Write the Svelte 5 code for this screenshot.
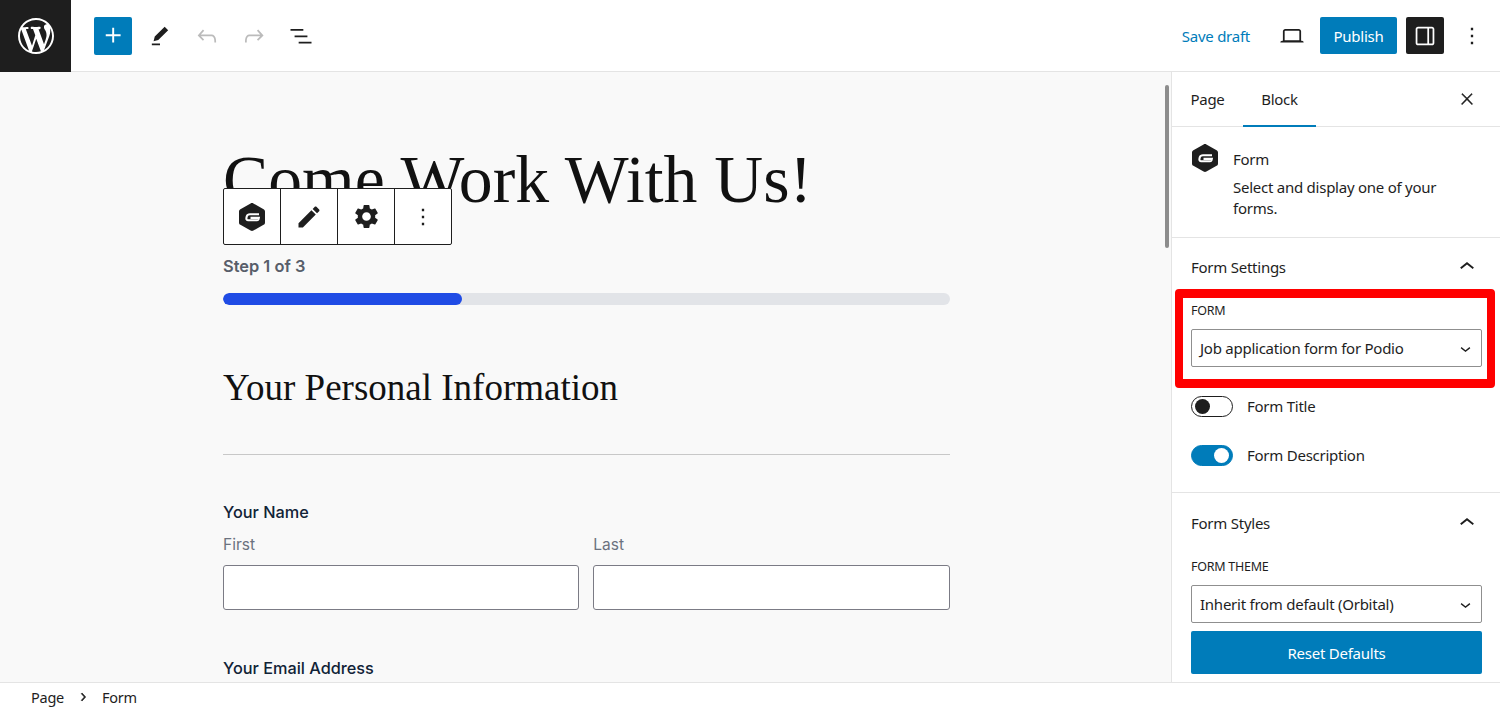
<script lang="ts">
  const icons = {
    plus: "M11 12.5V17.5H12.5V12.5H17.5V11H12.5V6H11V11H6V12.5H11Z",
    tools: "m19 7-3-3-8.5 8.5-1 4 4-1L19 7Zm-7 11.5H5V20h7v-1.5Z",
    undo: "M18.3 11.7c-.6-.6-1.4-.9-2.3-.9H6.7l2.9-3.3-1.1-1-4.5 5L8.5 16l1-1-2.7-2.7H16c.5 0 .9.2 1.3.5 1 1 1 3.4 1 4.5v.3h1.5v-.2c0-1.5 0-4.3-1.5-5.7z",
    redo: "M15.6 6.5l-1.1 1 2.9 3.3H8c-.9 0-1.7.3-2.3.9-1.4 1.5-1.4 4.2-1.4 5.6v.2h1.5v-.3c0-1.1 0-3.5 1-4.5.3-.3.7-.5 1.3-.5h9.2L14.5 15l1.1 1.1 4.6-4.6-4.6-5z",
    list: "M3 6h11v1.5H3V6Zm3.5 5.5h11V13h-11v-1.5ZM21 17H10v1.5h11V17Z",
    laptop: "M20.5 16h-.7V8c0-1.1-.9-2-2-2H6.2c-1.1 0-2 .9-2 2v8h-.7c-.8 0-1.5.7-1.5 1.5h20c0-.8-.7-1.5-1.5-1.5zM5.7 8c0-.3.2-.5.5-.5h11.6c.3 0 .5.2.5.5v7.6H5.7V8z",
    sidebar: "M18 4H6c-1.1 0-2 .9-2 2v12c0 1.1.9 2 2 2h12c1.1 0 2-.9 2-2V6c0-1.1-.9-2-2-2zm-4 14.5H6c-.3 0-.5-.2-.5-.5V6c0-.3.2-.5.5-.5h8v13zm4.5-.5c0 .3-.2.5-.5.5h-2.5v-13H18c.3 0 .5.2.5.5v12z",
    more: "M13 19h-2v-2h2v2zm0-6h-2v-2h2v2zm0-6h-2V5h2v2z",
    close: "M13 11.8l6.1-6.3-1-1-6.1 6.2-6.1-6.2-1 1 6.1 6.3-6.5 6.7 1 1 6.5-6.6 6.5 6.6 1-1z",
    up: "M6.5 12.4L12 8l5.5 4.4-.9 1.2L12 10l-4.5 3.6-1-1.2z",
    down: "M17.5 11.6L12 16l-5.5-4.4.9-1.2L12 14l4.5-3.6 1 1.2z",
    right: "M10.6 6L9.4 7l4.6 5-4.6 5 1.2 1 5.4-6z",
    pencil: "M3 17.25V21h3.75L17.81 9.94l-3.75-3.75L3 17.25zM20.71 7.04c.39-.39.39-1.02 0-1.41l-2.34-2.34c-.39-.39-1.02-.39-1.41 0l-1.83 1.83 3.75 3.75 1.83-1.83z",
    gear: "M19.14 12.94c.04-.3.06-.61.06-.94 0-.32-.02-.64-.07-.94l2.03-1.58c.18-.14.23-.41.12-.61l-1.92-3.32c-.12-.22-.37-.29-.59-.22l-2.39.96c-.5-.38-1.03-.7-1.62-.94l-.36-2.54c-.04-.24-.24-.41-.48-.41h-3.84c-.24 0-.43.17-.47.41l-.36 2.54c-.59.24-1.13.57-1.62.94l-2.39-.96c-.22-.08-.47 0-.59.22L2.74 8.87c-.12.21-.08.47.12.61l2.03 1.58c-.05.3-.09.63-.09.94s.02.64.07.94l-2.03 1.58c-.18.14-.23.41-.12.61l1.92 3.32c.12.22.37.29.59.22l2.39-.96c.5.38 1.03.7 1.62.94l.36 2.54c.05.24.24.41.48.41h3.84c.24 0 .44-.17.47-.41l.36-2.54c.59-.24 1.13-.56 1.62-.94l2.39.96c.22.08.47 0 .59-.22l1.92-3.32c.12-.22.07-.47-.12-.61l-2.01-1.58zM12 15.6c-1.98 0-3.6-1.62-3.6-3.6s1.62-3.6 3.6-3.6 3.6 1.62 3.6 3.6-1.62 3.6-3.6 3.6z",
    wp: "M20 10c0-5.51-4.49-10-10-10C4.48 0 0 4.49 0 10c0 5.52 4.48 10 10 10 5.51 0 10-4.48 10-10zM7.78 15.37L4.37 6.22c.55-.02 1.17-.08 1.17-.08.5-.06.44-1.13-.06-1.11 0 0-1.45.11-2.37.11-.18 0-.37 0-.58-.01C4.12 2.69 6.87 1.11 10 1.11c2.33 0 4.45.87 6.05 2.34-.68-.11-1.65.39-1.65 1.58 0 .74.45 1.36.9 2.1.35.61.55 1.36.55 2.46 0 1.49-1.4 5-1.4 5l-3.03-8.37c.54-.02.82-.17.82-.17.5-.05.44-1.25-.06-1.22 0 0-1.44.12-2.38.12-.87 0-2.33-.12-2.33-.12-.5-.03-.56 1.2-.06 1.22l.92.08 1.26 3.41zM17.41 10c.24-.64.74-1.87.43-4.25.7 1.29 1.05 2.71 1.05 4.25 0 3.29-1.73 6.24-4.4 7.78.97-2.59 1.94-5.2 2.92-7.78zM6.1 18.09C3.12 16.65 1.11 13.53 1.11 10c0-1.3.23-2.48.72-3.59C3.25 10.3 4.67 14.2 6.1 18.09zm4.03-6.63l2.58 6.98c-.86.29-1.76.45-2.71.45-.79 0-1.57-.11-2.29-.33.81-2.38 1.62-4.74 2.42-7.1z"
  };
</script>

{#snippet icon(d: string, size = 28, box = 24)}
  <svg class="icon" width={size} height={size} viewBox="0 0 {box} {box}" fill="currentColor"><path {d} /></svg>
{/snippet}

{#snippet gravity()}
  <svg class="icon" width="26" height="28" viewBox="0 0 26 28">
    <path d="M13 0c.5 0 1 .1 1.4.4l10.200 5.800c.9.500 1.400 1.400 1.400 2.400v10.800c0 1-.5 1.900-1.400 2.400l-10.200 5.800c-.9.500-1.900.500-2.800 0L1.400 21.800C.5 21.300 0 20.400 0 19.400V8.600c0-1 .5-1.900 1.400-2.400L11.600.4c.4-.3.9-.4 1.400-.4Z" fill="#1e1e1e" />
    <path d="M20 11.200H11c-1.800 0-2.800.8-3.200 2.100l-.3 1.200c-.4 1.700.2 2.800 1.800 2.800h8.800c.8 0 1.200-.3 1.400-1l.3-1.400H11.500" fill="none" stroke="#fff" stroke-width="2.100" />
  </svg>
{/snippet}

<div class="editor">
  <header class="topbar">
    <a class="wp-logo" href="#top" aria-label="WordPress">{@render icon(icons.wp, 36, 20)}</a>
    <div class="tools">
      <button class="add">{@render icon(icons.plus, 31)}</button>
      <button class="tool">{@render icon(icons.tools)}</button>
      <button class="tool off">{@render icon(icons.undo)}</button>
      <button class="tool off">{@render icon(icons.redo)}</button>
      <button class="tool">{@render icon(icons.list)}</button>
    </div>
    <div class="actions">
      <button class="save">Save draft</button>
      <button class="tool view">{@render icon(icons.laptop)}</button>
      <button class="publish">Publish</button>
      <button class="side-toggle">{@render icon(icons.sidebar)}</button>
      <button class="tool dots">{@render icon(icons.more)}</button>
    </div>
  </header>

  <div class="main">
    <main class="canvas">
      <div class="scroll-thumb"></div>
      <div class="doc">
        <h1>Come Work With Us!</h1>
        <div class="block-toolbar">
          <button>{@render gravity()}</button>
          <button>{@render icon(icons.pencil, 28)}</button>
          <button>{@render icon(icons.gear, 29)}</button>
          <button>{@render icon(icons.more, 28)}</button>
        </div>
        <div class="step">Step 1 of 3</div>
        <div class="progress"><div class="bar" style="width: 32.9%"></div></div>
        <h2>Your Personal Information</h2>
        <hr />
        <div class="legend">Your Name</div>
        <div class="name-row">
          <label>First<input type="text" /></label>
          <label>Last<input type="text" /></label>
        </div>
        <div class="legend email">Your Email Address</div>
      </div>
    </main>

    <aside class="sidebar">
      <div class="tabs">
        <button class="tab">Page</button>
        <button class="tab active">Block</button>
        <button class="tab-close">{@render icon(icons.close, 18)}</button>
      </div>

      <section class="block-card">
        {@render gravity()}
        <div class="card-text">
          <div class="card-title">Form</div>
          <p>Select and display one of your forms.</p>
        </div>
      </section>

      <section class="panel settings">
        <div class="panel-head"><span>Form Settings</span>{@render icon(icons.up, 30)}</div>
        <div class="highlight">
          <div class="field-label">FORM</div>
          <div class="select"><span>Job application form for Podio</span>{@render icon(icons.down, 21)}</div>
        </div>
        <div class="toggle-row">
          <span class="toggle"><i></i></span>Form Title
        </div>
        <div class="toggle-row">
          <span class="toggle on"><i></i></span>Form Description
        </div>
      </section>

      <section class="panel styles">
        <div class="panel-head"><span>Form Styles</span>{@render icon(icons.up, 30)}</div>
        <div class="field-label">FORM THEME</div>
        <div class="select"><span>Inherit from default (Orbital)</span>{@render icon(icons.down, 21)}</div>
        <button class="reset">Reset Defaults</button>
      </section>
    </aside>
  </div>

  <footer class="crumbs">
    <span>Page</span><span class="sep">{@render icon(icons.right, 16)}</span><span>Form</span>
  </footer>
</div>

<style>
  :global(body) { margin: 0; background: #fff; }
  .editor {
    height: 710px;
    display: flex;
    flex-direction: column;
    overflow: hidden;
    color: #1e1e1e;
    font-family: "Noto Sans", "Open Sans", sans-serif;
    font-size: 15px;
    letter-spacing: -0.25px;
  }
  button {
    font: inherit;
    letter-spacing: inherit;
    color: inherit;
    background: none;
    border: 0;
    padding: 0;
    display: flex;
    align-items: center;
    justify-content: center;
  }
  .icon { display: block; flex-shrink: 0; }

  /* top bar */
  .topbar {
    height: 71px;
    flex-shrink: 0;
    display: flex;
    align-items: center;
    background: #fff;
    border-bottom: 1px solid #e4e4e4;
  }
  .wp-logo {
    width: 71px;
    height: 72px;
    margin-bottom: -1px;
    background: #1e1e1e;
    color: #fff;
    display: flex;
    align-items: center;
    justify-content: center;
  }
  .tools { display: flex; align-items: center; margin-left: 23px; }
  .add {
    width: 38px;
    height: 38px;
    border-radius: 2px;
    background: #007cba;
    color: #fff;
    margin-right: 9px;
  }
  .tool { width: 38px; height: 38px; }
  .tools .tool + .tool { margin-left: 9px; }
  .tool.off { color: #bbb; }
  .actions { margin-left: auto; display: flex; align-items: center; }
  .save { color: #007cba; margin-right: 23px; }
  .view { margin-right: 9px; }
  .publish {
    width: 77px;
    height: 37px;
    border-radius: 2px;
    background: #007cba;
    color: #fff;
    margin-right: 9px;
  }
  .side-toggle {
    width: 38px;
    height: 37px;
    border-radius: 2px;
    background: #1e1e1e;
    color: #fff;
  }
  .dots { margin: 0 9px; }

  /* main */
  .main { flex: 1; min-height: 0; display: flex; }
  .canvas {
    flex: 1;
    min-width: 0;
    position: relative;
    overflow: hidden;
    background: #f9f9f9;
  }
  .scroll-thumb {
    position: absolute;
    left: 1165px;
    top: 13px;
    width: 4px;
    height: 163px;
    border-radius: 2px;
    background: #8d8d8d;
  }
  .doc {
    position: relative;
    width: 726.5px;
    margin-left: 223px;
    padding-top: 69px;
    font-family: Inter, sans-serif;
    letter-spacing: 0;
  }
  h1 {
    margin: 0;
    font: 400 67.7px/78px "Liberation Serif", serif;
    color: #111;
  }
  .block-toolbar {
    position: absolute;
    left: 0;
    top: 116px;
    display: flex;
    background: #fff;
    border: 1px solid #1e1e1e;
    border-radius: 2px;
  }
  .block-toolbar button {
    width: 57px;
    height: 55px;
    border-left: 1px solid #1e1e1e;
    color: #1e1e1e;
  }
  .block-toolbar button:first-child { width: 56px; border-left: 0; }
  .step {
    margin-top: 37px;
    font-size: 16.4px;
    line-height: 20px;
    font-weight: 600;
    color: #585e6a;
  }
  .progress {
    margin-top: 17px;
    height: 12px;
    border-radius: 6px;
    background: #e2e4e8;
    overflow: hidden;
  }
  .bar { height: 100%; background: #204ce5; border-radius: 6px; }
  h2 {
    margin: 60px 0 0;
    font: 400 37px/46px "Liberation Serif", serif;
    color: #111;
  }
  hr {
    margin: 43px 0 0;
    border: 0;
    border-top: 1px solid #c8c8c8;
  }
  .legend {
    margin-top: 47px;
    font-size: 16.3px;
    line-height: 20px;
    font-weight: 500;
    color: #112337;
  }
  .name-row {
    display: grid;
    grid-template-columns: 1fr 1fr;
    gap: 14px;
    margin-top: 13px;
  }
  label {
    display: flex;
    flex-direction: column;
    gap: 10px;
    font-size: 15.5px;
    line-height: 20px;
    color: #6b7280;
  }
  input {
    height: 45px;
    box-sizing: border-box;
    background: #fff;
    border: 1px solid #7b7b85;
    border-radius: 3px;
  }
  .legend.email { margin-top: 48px; }

  /* sidebar */
  .sidebar {
    width: 328px;
    flex-shrink: 0;
    background: #fff;
    border-left: 1px solid #e4e4e4;
    overflow: hidden;
  }
  .tabs {
    height: 54px;
    display: flex;
    align-items: stretch;
    border-bottom: 1px solid #e4e4e4;
  }
  .tab { width: 71px; box-sizing: border-box; height: 55px; padding-bottom: 2px; }
  .tab.active { width: 73px; box-shadow: inset 0 -2px 0 #007cba; }
  .tab-close { margin-left: auto; margin-right: 21px; width: 24px; stroke: #1e1e1e; stroke-width: 0.7px; }
  .block-card {
    display: flex;
    gap: 15px;
    padding: 17px 19px 18px 20px;
    border-bottom: 1px solid #e4e4e4;
  }
  .card-title { line-height: 20px; margin-top: 5px; }
  .card-text p { margin: 8px 0 0; line-height: 21px; width: 220px; }
  .panel { padding: 0 18px 0 19px; border-bottom: 1px solid #e4e4e4; }
  .panel-head {
    display: flex;
    align-items: center;
    justify-content: space-between;
    height: 58px;
  }
  .settings { padding-bottom: 26px; }
  .highlight {
    margin: -7px -13px 0 -16px;
    padding: 3px 5px 12px 8px;
    border: solid #f00;
    border-width: 9px 8px;
    border-radius: 4px;
  }
  .field-label { font-size: 12.5px; line-height: 20px; }
  .select {
    display: flex;
    align-items: center;
    justify-content: space-between;
    box-sizing: border-box;
    height: 38px;
    margin-top: 8px;
    padding: 0 5px 0 8px;
    border: 1px solid #8f8f8f;
    border-radius: 2px;
    background: #fff;
  }
  .toggle-row {
    display: flex;
    align-items: center;
    gap: 14px;
    height: 22px;
    margin-top: 27px;
  }
  .highlight + .toggle-row { margin-top: 7px; }
  .toggle {
    width: 42px;
    height: 21px;
    box-sizing: border-box;
    display: flex;
    align-items: center;
    padding: 0 3px;
    border: 1px solid #1e1e1e;
    border-radius: 11px;
  }
  .toggle i { width: 15px; height: 15px; border-radius: 50%; background: #1e1e1e; }
  .toggle.on { background: #007cba; border-color: #007cba; justify-content: flex-end; }
  .toggle.on i { background: #fff; }
  .styles { border-bottom: 0; }
  .styles .panel-head { height: 60px; }
  .styles .field-label { margin-top: 4px; }
  .reset {
    width: 100%;
    height: 43px;
    margin-top: 8px;
    border-radius: 2px;
    background: #007cba;
    color: #fff;
  }

  /* breadcrumb */
  .crumbs {
    height: 27px;
    flex-shrink: 0;
    display: flex;
    align-items: center;
    gap: 11px;
    padding-left: 31px;
    font-size: 14.5px;
    background: #fff;
    border-top: 1px solid #e4e4e4;
  }
  .sep { stroke: #1e1e1e; stroke-width: 1px; }
</style>
